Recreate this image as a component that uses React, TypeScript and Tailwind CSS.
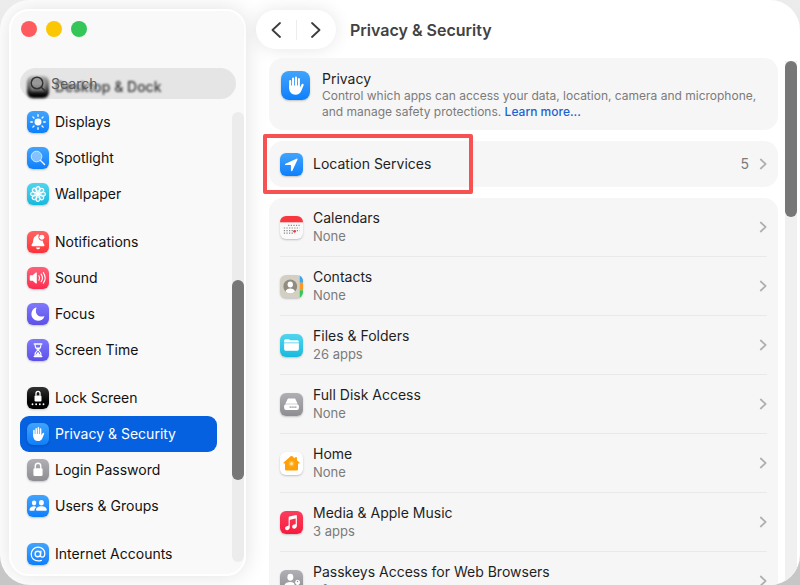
import type { ReactNode } from "react";

type TileProps = {
  color: string;
  size?: string;
  children: ReactNode;
};

const Tile = ({ color, size = "size-[22px] rounded-md", children }: TileProps) => (
  <span className={`block shrink-0 overflow-hidden shadow-[0_1px_2px_rgba(0,0,0,0.22)] ${size} ${color}`}>
    <svg viewBox="0 0 24 24" className="block size-full" fill="#fff" aria-hidden="true">
      {children}
    </svg>
  </span>
);

const BLUE = "bg-linear-to-b from-[#40a4fd] to-[#0a7ffb]";
const RED = "bg-linear-to-b from-[#ff6363] to-[#fb3138]";
const PINK = "bg-linear-to-b from-[#ff5f78] to-[#fb2a50]";
const PURPLE = "bg-linear-to-b from-[#8078fb] to-[#5d50e8]";
const GRAY = "bg-linear-to-b from-[#b0b0b4] to-[#8d8d92]";
const CYAN = "bg-linear-to-b from-[#4fd5ef] to-[#12b9de]";
const BLACK = "bg-linear-to-b from-[#333] to-[#000]";

const SunGlyph = () => (
  <>
    <circle cx="12" cy="12" r="3.8" />
    <path
      d="M12 4.1v1.7M12 18.2v1.7M4.1 12h1.7M18.2 12h1.7M6.4 6.4l1.2 1.2M16.4 16.4l1.2 1.2M6.4 17.6l1.2-1.2M16.4 7.6l1.2-1.2"
      stroke="#fff"
      strokeWidth="1.5"
      strokeLinecap="round"
    />
  </>
);

const SpotlightGlyph = () => (
  <>
    <path d="M14.6 14.6l4.6 4.5" stroke="#fff" strokeWidth="1.5" strokeLinecap="round" />
    <circle cx="10.4" cy="10.4" r="5.8" fill="#a3d2fd" fillOpacity="0.75" stroke="#d9edff" strokeWidth="1" />
  </>
);

const petals = [0, 45, 90, 135, 180, 225, 270, 315];

const FlowerGlyph = () => (
  <g stroke="#fff" strokeWidth="1.2" fill="#fff" fillOpacity="0.2">
    {petals.map((angle) => (
      <ellipse key={angle} cx="12" cy="6.5" rx="2.2" ry="2.5" transform={`rotate(${angle} 12 12)`} />
    ))}
    <circle cx="12" cy="12" r="1.9" fillOpacity="1" />
  </g>
);

const BellGlyph = () => (
  <>
    <path d="M11.6 3.8c-.9 0-1.5.6-1.6 1.3-2 .7-3 2.4-3.2 4.8-.1 2.5-.7 3.7-1.6 4.7-.6.7-.3 1.9.7 1.9h12.200c1 0 1.300-1.200.7-1.900-.8-.9-1.300-2-1.500-4.100-2.600.5-4.900-1.200-4.900-3.900 0-.9.300-1.700.8-2.400-.4-.3-1-.4-1.600-.4z" />
    <path d="M9.8 18h4.600c-.2 1.300-1.100 2-2.300 2s-2.100-.7-2.300-2z" />
    <circle cx="16.2" cy="6.8" r="2.7" />
  </>
);

const SoundGlyph = () => (
  <>
    <path d="M3 10c0-.6.4-1 1-1h2.200l3.400-3c.5-.4 1.100-.1 1.100.5v10.900c0 .6-.6.900-1.100.5l-3.400-3H4c-.6 0-1-.4-1-1z" />
    <path
      d="M13 9.600c.9 1.500.9 3.300 0 4.800M15.400 7.800c1.700 2.500 1.700 5.800 0 8.300M17.800 6.200c2.500 3.500 2.500 8 0 11.500"
      fill="none"
      stroke="#fff"
      strokeWidth="1.2"
      strokeLinecap="round"
    />
  </>
);

const MoonGlyph = () => (
  <path d="M9.600 4.900c.5-.2.900.2.700.7-.4 1-.6 2-.6 3 0 3.700 2.700 6.200 6.400 6.200.9 0 1.500-.2 2.100-.4.500-.2.900.2.700.7-1.100 2.700-3.600 4.300-6.700 4.300-4.300 0-7.400-3.100-7.400-7.300 0-3.300 1.900-6.100 4.800-7.200z" />
);

const HourglassGlyph = () => (
  <>
    <path d="M8 4.600h8c.6 0 .9.300.9.800s-.4.800-.9.800H8c-.5 0-.9-.3-.9-.8s.4-.8.900-.8zM8 18.200h8c.6 0 .9.300.9.800s-.4.800-.9.800H8c-.5 0-.9-.3-.9-.8s.4-.8.900-.8z" />
    <path
      d="M8.700 6c0 3 .8 4.100 2.400 5.300.5.400.5 1 0 1.400-1.600 1.200-2.400 2.500-2.400 5.600h6.600c0-3.100-.8-4.400-2.400-5.600-.5-.4-.5-1 0-1.400C14.500 10.100 15.300 9 15.300 6"
      fill="none"
      stroke="#fff"
      strokeWidth="1.2"
    />
    <path d="M10 9.200h4c-.5 1-1.300 1.600-2 2.200-.7-.6-1.500-1.200-2-2.200zM12 14l2.800 3.900H9.200z" />
  </>
);

const LockScreenGlyph = () => (
  <>
    <rect x="8.2" y="9.2" width="7.6" height="6.6" rx="1.2" />
    <path d="M9.800 9.600V7.200a2.200 2.400 0 0 1 4.400 0v2.400" fill="none" stroke="#fff" strokeWidth="1.4" />
    <circle cx="6" cy="18.8" r="1" />
    <circle cx="10" cy="18.8" r="1" />
    <circle cx="14" cy="18.8" r="1" />
    <circle cx="18" cy="18.8" r="1" />
  </>
);

const HandGlyph = () => (
  <>
    <path
      d="M7.600 8.300v5.500M10 6.200v7M12.400 5.300v8M14.800 6.600v8"
      stroke="#fff"
      strokeWidth="1.7"
      strokeLinecap="round"
    />
    <path d="M6.750 12h8.900v1.800l1.300-2.600c.3-.6.900-.8 1.300-.6.500.2.600.8.400 1.300l-1.900 4.600c-.8 2-2.400 3.100-4.700 3.100-3.200 0-5.300-2.100-5.300-5.500z" />
  </>
);

const PadlockGlyph = () => (
  <>
    <rect x="7" y="10.2" width="10" height="8.3" rx="1.3" />
    <path d="M9 10.600V7.900a3 3.200 0 0 1 6 0v2.700" fill="none" stroke="#fff" strokeWidth="1.5" />
  </>
);

const UsersGlyph = () => (
  <>
    <ellipse cx="7.7" cy="8.8" rx="2.4" ry="2.7" />
    <path d="M2.700 16.300c0-2.300 2.100-3.900 5-3.900 1 0 1.900.2 2.600.6-1.500 1.100-2.200 2.500-2.200 4.200H3.700c-.6 0-1-.3-1-.9z" />
    <ellipse cx="15.7" cy="8.4" rx="2.7" ry="3" />
    <path d="M9.800 16.200c0-2.300 2.500-4 5.900-4s5.900 1.700 5.900 4c0 .7-.4 1-1.100 1h-9.600c-.7 0-1.100-.3-1.100-1z" />
  </>
);

const AtGlyph = () => (
  <g fill="none" stroke="#fff" strokeWidth="1.4" strokeLinecap="round">
    <circle cx="11.8" cy="12" r="3" />
    <path d="M15.200 8.900l-.5 4.400c-.1 1.200.6 2 1.700 2 1.900 0 3-1.700 3-3.900 0-3.900-3-6.800-7.200-6.800-4.400 0-7.600 3.200-7.600 7.500 0 4.400 3.100 7.400 7.600 7.400 1.300 0 2.500-.2 3.500-.6" />
  </g>
);

const ArrowGlyph = () => (
  <path d="M17.200 5.900L5.700 11.100c-.9.400-.7 1.500.3 1.500h5.100c.2 0 .3.100.3.300v5.100c0 1 1.200 1.300 1.600.3l5.200-11.300c.3-.8-.3-1.400-1-1.100z" />
);

const CalendarGlyph = () => (
  <>
    <rect width="24" height="6.6" fill="#f8373f" />
    <path
      d="M8.500 9.800h12M4 12.500h16.500M4 15.200h16.500M4 17.900h11"
      stroke="#8b8b8b"
      strokeWidth="1.2"
      strokeDasharray="1.3 1.4"
    />
    <circle cx="15.2" cy="16" r="1.4" fill="#f8373f" />
  </>
);

const ContactsGlyph = () => (
  <>
    <rect x="20.6" width="3.4" height="8" fill="#35a7f3" />
    <rect x="20.6" y="8" width="3.4" height="8" fill="#ff9726" />
    <rect x="20.6" y="16" width="3.4" height="8" fill="#31c958" />
    <circle cx="10.7" cy="12" r="7.2" fill="#908c80" />
    <ellipse cx="10.7" cy="9.9" rx="2.8" ry="3.2" />
    <path d="M5.700 17.200c.6-2.100 2.500-3.100 5-3.100s4.400 1 5 3.100a7.200 7.200 0 0 1-10 0z" />
  </>
);

const FolderGlyph = () => (
  <>
    <path d="M4.300 7.500c0-1.200.7-1.900 1.900-1.900h2.600c.7 0 1.100.2 1.500.6l.5.400h7c1.200 0 1.900.7 1.900 1.800v.4H4.300z" />
    <path d="M4.300 9.700h15.400v5.900c0 1.200-.7 1.900-1.900 1.900H6.200c-1.200 0-1.900-.7-1.900-1.900z" />
  </>
);

const DiskGlyph = () => (
  <>
    <path d="M7.500 7.200c.3-1 .9-1.500 1.900-1.500h5.200c1 0 1.600.5 1.900 1.500l1.900 4.100c-.3-.1-.7-.2-1.100-.2H6.700c-.4 0-.8.100-1.100.200z" />
    <rect x="4.3" y="11.8" width="15.4" height="5.9" rx="2" />
    <path d="M10 14.700h7.200" stroke="#96969a" strokeWidth="1.2" strokeDasharray="1.5 .4" />
  </>
);

const HomeGlyph = () => (
  <>
    <path
      d="M11.100 4.500c.6-.5 1.200-.5 1.800 0l2.600 2.200V5.600h2.200v3l2.300 2c.8.700.4 1.500-.5 1.500h-.7v6c0 .8-.4 1.200-1.200 1.200H6.400c-.8 0-1.200-.4-1.200-1.200v-6h-.7c-.9 0-1.300-.8-.5-1.500z"
      fill="#ff9f0a"
    />
    <circle cx="12" cy="12.2" r="3" fill="#ffb62e" />
    <circle cx="12" cy="12.2" r="1.4" fill="#fff3cf" />
  </>
);

const MusicGlyph = () => (
  <path d="M17 4.300L9.800 5.800c-.5.100-.8.400-.8.900v8.200c0 .3-.2.500-.5.600l-1.200.3c-1.300.3-2 1.100-2 2.200 0 1.200.9 2 2.100 2 1.600 0 2.800-1.200 2.800-3V9.600c0-.3.200-.5.500-.6l5.200-1.100c.3-.1.500.1.500.4v5c0 .3-.2.500-.5.600l-1.200.3c-1.300.3-2 1.100-2 2.200 0 1.200.9 2 2.100 2 1.600 0 2.800-1.200 2.800-3V5.200c0-.7-.3-1-.6-.9z" />
);

const PasskeyGlyph = () => (
  <>
    <ellipse cx="10.8" cy="7.6" rx="3.1" ry="3.6" />
    <path d="M4.300 17.500c0-3.200 2.600-5 6.300-5 1.600 0 3 .3 4 1 .2 1.300.8 2.200 1.700 2.900v2.200H5.400c-.7 0-1.100-.4-1.100-1.100z" />
    <path d="M18.300 10.100a2.700 2.700 0 0 1 1.100 5.100v.9l.9 1-.9 1 .8.900-1.900 1.900-1-1.100v-4.600a2.700 2.700 0 0 1 1-5.100z" />
    <circle cx="18.3" cy="12" r=".8" fill="#96969a" />
  </>
);

type SidebarItem = { label: string; color: string; glyph: ReactNode; active?: boolean };

const sidebarGroups: SidebarItem[][] = [
  [
    { label: "Displays", color: BLUE, glyph: <SunGlyph /> },
    { label: "Spotlight", color: BLUE, glyph: <SpotlightGlyph /> },
    { label: "Wallpaper", color: CYAN, glyph: <FlowerGlyph /> },
  ],
  [
    { label: "Notifications", color: RED, glyph: <BellGlyph /> },
    { label: "Sound", color: PINK, glyph: <SoundGlyph /> },
    { label: "Focus", color: PURPLE, glyph: <MoonGlyph /> },
    { label: "Screen Time", color: PURPLE, glyph: <HourglassGlyph /> },
  ],
  [
    { label: "Lock Screen", color: BLACK, glyph: <LockScreenGlyph /> },
    { label: "Privacy & Security", color: BLUE, glyph: <HandGlyph />, active: true },
    { label: "Login Password", color: GRAY, glyph: <PadlockGlyph /> },
    { label: "Users & Groups", color: BLUE, glyph: <UsersGlyph /> },
  ],
  [{ label: "Internet Accounts", color: BLUE, glyph: <AtGlyph /> }],
];

const permissions = [
  { label: "Calendars", detail: "None", color: "bg-[#fafafa]", glyph: <CalendarGlyph /> },
  { label: "Contacts", detail: "None", color: "bg-[#d3d0c3]", glyph: <ContactsGlyph /> },
  { label: "Files & Folders", detail: "26 apps", color: CYAN, glyph: <FolderGlyph /> },
  { label: "Full Disk Access", detail: "None", color: GRAY, glyph: <DiskGlyph /> },
  { label: "Home", detail: "None", color: "bg-white", glyph: <HomeGlyph /> },
  { label: "Media & Apple Music", detail: "3 apps", color: "bg-linear-to-b from-[#fb3c5c] to-[#f9173c]", glyph: <MusicGlyph /> },
  { label: "Passkeys Access for Web Browsers", detail: "1 full access", color: GRAY, glyph: <PasskeyGlyph /> },
];

const Disclosure = () => (
  <svg viewBox="0 0 8 12" className="h-3 w-2 shrink-0" fill="none" stroke="#b0b0b0" strokeWidth="1.8" strokeLinecap="round" strokeLinejoin="round" aria-hidden="true">
    <path d="M1.800 1.500L6.600 6l-4.800 4.500" />
  </svg>
);

const SidebarLink = ({ label, color, glyph, active }: SidebarItem) => (
  <a
    href="#settings"
    aria-current={active ? "page" : undefined}
    className={`flex h-9 items-center gap-[6px] rounded-[9px] px-[7px] text-sm ${active ? "bg-[#0561e0] text-white" : "text-[#111]"}`}
  >
    <Tile color={color}>{glyph}</Tile>
    {label}
  </a>
);

const Sidebar = () => (
  <aside className="flex w-[237px] shrink-0 flex-col overflow-hidden rounded-[20px] border-2 border-white bg-[#f9f9f9] shadow-[0_0_22px_rgba(0,0,0,0.12)]">
    <div className="flex h-[57px] shrink-0 gap-[9px] pt-[10px] pl-[10px]">
      <button type="button" aria-label="Close" className="size-4 rounded-full bg-[#ff5b5f]" />
      <button type="button" aria-label="Minimise" className="size-4 rounded-full bg-[#fbc704]" />
      <button type="button" aria-label="Zoom" className="size-4 rounded-full bg-[#34c658]" />
    </div>
    <div className="relative flex min-h-0 flex-1 gap-[15px] pl-[9px]">
      <nav className="flex min-w-0 flex-1 flex-col gap-3 overflow-hidden">
        <div>
          {/* row scrolled underneath the search field */}
          <a href="#desktop" className="flex h-9 items-center gap-[6px] px-[7px] pt-[2px] text-sm font-medium text-[#3c3c3c] blur-[1px]">
            <Tile color="bg-linear-to-b from-[#c4c4c4] via-[#666] to-[#000]">
              <rect x="4" y="6" width="16" height="11" rx="1.5" fillOpacity="0.3" />
            </Tile>
            Desktop &amp; Dock
          </a>
          {sidebarGroups[0].map((item) => (
            <SidebarLink key={item.label} {...item} />
          ))}
        </div>
        {sidebarGroups.slice(1).map((group) => (
          <div key={group[0].label}>
            {group.map((item) => (
              <SidebarLink key={item.label} {...item} />
            ))}
          </div>
        ))}
      </nav>
      <div className="mt-11 mb-3 flex w-3 flex-col rounded-full bg-[#ececec]">
        <div className="flex-[168]" />
        <div className="flex-[200] rounded-full bg-[#777]" />
        <div className="flex-[82]" />
      </div>
      <label className="absolute top-0 right-2 left-[9px] flex h-[31px] items-center gap-[3px] rounded-full bg-black/8 pl-2">
        <svg viewBox="0 0 20 20" className="size-5 shrink-0" fill="none" stroke="#333" strokeWidth="1.5" strokeLinecap="round" aria-hidden="true">
          <circle cx="9" cy="9" r="5.8" />
          <path d="M13.300 13.300l3.600 3.600" />
        </svg>
        <input
          type="text"
          aria-label="Search"
          placeholder="Search"
          className="w-full min-w-0 bg-transparent text-sm outline-none placeholder:text-[#5c5c5c]"
        />
      </label>
    </div>
  </aside>
);

const Toolbar = () => (
  <header className="h-12 shrink-0 pt-px">
    <div className="flex items-center gap-[14px]">
      <div className="flex h-[39px] w-20 items-center rounded-full bg-white shadow-[0_0_18px_rgba(0,0,0,0.10)]">
        <button type="button" aria-label="Back" className="flex flex-1 justify-center">
          <svg viewBox="0 0 10 16" className="h-4 w-[10px]" fill="none" stroke="#3c3c3c" strokeWidth="1.8" strokeLinecap="round" strokeLinejoin="round">
            <path d="M9 1L1.500 8l7.500 7" />
          </svg>
        </button>
        <div className="h-5 w-px bg-[#ececec]" />
        <button type="button" aria-label="Forward" className="flex flex-1 justify-center">
          <svg viewBox="0 0 10 16" className="h-4 w-[10px]" fill="none" stroke="#3c3c3c" strokeWidth="1.8" strokeLinecap="round" strokeLinejoin="round">
            <path d="M1 1l7.500 7L1 15" />
          </svg>
        </button>
      </div>
      <h1 className="text-base font-semibold text-[#424242]">Privacy &amp; Security</h1>
    </div>
  </header>
);

const PrivacyCard = () => (
  <section className="flex h-[72px] shrink-0 gap-3 rounded-[14px] bg-[#f6f6f6] px-3 pt-[11px]">
    <div className="pt-[2px]">
      <Tile color={BLUE} size="size-[29px] rounded-lg">
        <HandGlyph />
      </Tile>
    </div>
    <div>
      <h2 className="text-sm leading-[19px] text-[#1f1f1f]">Privacy</h2>
      <p className="text-xs leading-4 text-[#7b7b7b]">
        Control which apps can access your data, location, camera and microphone,
        <br />
        and manage safety protections.{" "}
        <a href="#learn" className="font-medium text-[#1a63d0]">
          Learn more...
        </a>
      </p>
    </div>
  </section>
);

const LocationCard = () => (
  <section className="relative shrink-0">
    <a href="#location" className="flex h-[46px] items-center gap-[10px] rounded-[14px] bg-[#f6f6f6] px-[11px] text-sm text-[#1f1f1f]">
      <Tile color={BLUE} size="size-[23px] rounded-md">
        <ArrowGlyph />
      </Tile>
      <span className="flex-1">Location Services</span>
      <span className="text-[#7b7b7b]">5</span>
      <Disclosure />
    </a>
    <div className="pointer-events-none absolute -top-[7px] -left-[6px] h-[60px] w-[210px] rounded-xs border-4 border-[#f85151]" />
  </section>
);

const PermissionList = () => (
  <ul className="shrink-0 divide-y divide-[#e9e9e9] rounded-[14px] bg-[#f6f6f6] px-[11px]">
    {permissions.map(({ label, detail, color, glyph }) => (
      <li key={label}>
        <a href="#permission" className="flex h-[58px] items-center gap-[10px]">
          <Tile color={color} size="size-[23px] rounded-md">
            {glyph}
          </Tile>
          <span className="flex-1">
            <span className="block text-sm leading-[18px] text-[#1f1f1f]">{label}</span>
            <span className="block text-[13px] leading-[18px] text-[#7b7b7b]">{detail}</span>
          </span>
          <Disclosure />
        </a>
      </li>
    ))}
  </ul>
);

const App = () => {
  return (
    <div className="h-screen overflow-hidden bg-linear-to-b from-[#ececec] to-[#c6c6c6] font-['Inter','Liberation_Sans',sans-serif]">
      <div className="flex h-full overflow-hidden rounded-[30px] bg-white pt-[9px] pl-[9px]">
        <div className="flex pb-[9px]">
          <Sidebar />
        </div>
        <main className="flex min-w-0 flex-1 flex-col pl-[10px]">
          <Toolbar />
          <div className="flex min-h-0 flex-1 gap-[7px] pt-px pr-[3px] pl-[13px]">
            <div className="flex min-w-0 flex-1 flex-col gap-[11px] pb-3">
              <PrivacyCard />
              <LocationCard />
              <PermissionList />
            </div>
            <div className="mt-[3px] w-3 bg-[#f0f0f0]">
              <div className="h-[156px] rounded-full bg-[#777]" />
            </div>
          </div>
        </main>
      </div>
    </div>
  );
};

export default App;
